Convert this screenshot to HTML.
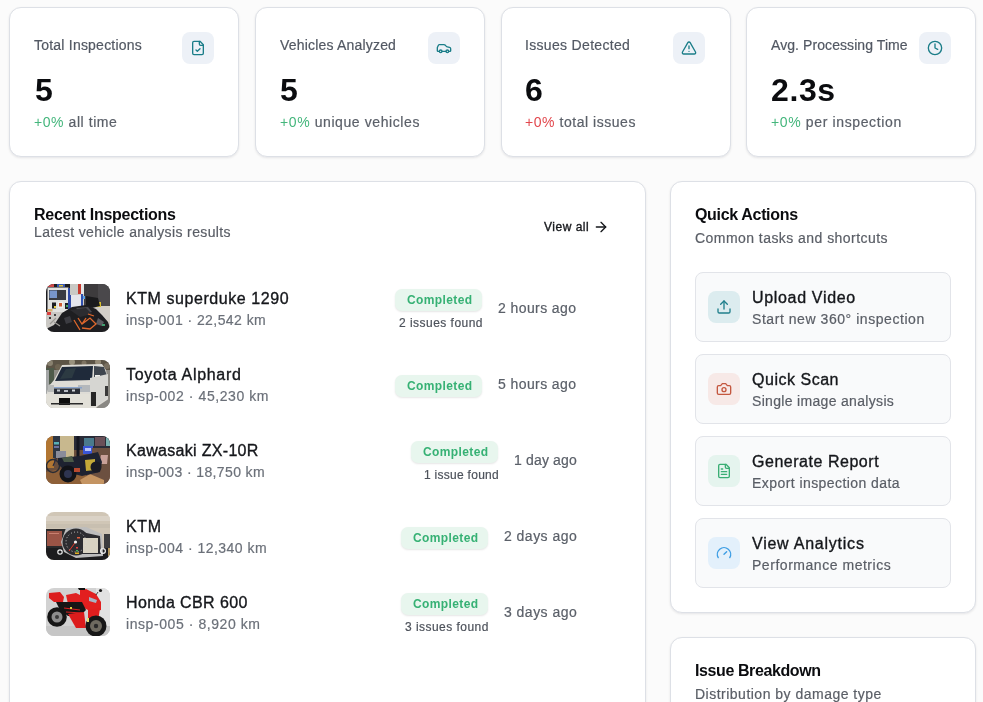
<!DOCTYPE html>
<html><head><meta charset="utf-8">
<style>
*{margin:0;padding:0;box-sizing:border-box}
html,body{width:983px;height:702px;overflow:hidden;background:#fbfbfb;font-family:"Liberation Sans",sans-serif}
.abs{position:absolute}
.t{position:absolute;white-space:pre;line-height:1;-webkit-text-stroke-width:.2px;will-change:transform}
.card{position:absolute;background:#fff;border:1px solid #dde0e6;border-radius:12px;box-shadow:0 1px 3px rgba(16,24,40,.06),0 1px 2px rgba(16,24,40,.04)}
.st{font-size:14px;color:#525863}
.num{font-size:32px;font-weight:700;color:#0b0c0f;-webkit-text-stroke-width:0}
.sub{font-size:14px;color:#5b6069}
.g{color:#44b67c;-webkit-text-stroke-width:0}
.r{color:#e2474d;-webkit-text-stroke-width:0}
.ibox{position:absolute;width:32px;height:32px;border-radius:8px;background:#edf1f7}
.ibox svg{position:absolute;left:8px;top:8px;width:16px;height:16px}
.h{font-size:16px;font-weight:700;color:#0b0c0f;-webkit-text-stroke-width:0}
.hs{font-size:14px;color:#5a5e66}
.rt{font-size:16px;color:#15171b;-webkit-text-stroke-width:.35px}
.rs{font-size:14px;color:#6b7079}
.badge{position:absolute;width:87px;height:22px;border-radius:7px;background:#e8f6ee;box-shadow:0 1px 2px rgba(0,0,0,.1)}
.bt{font-size:12px;font-weight:700;color:#36b174;-webkit-text-stroke-width:0}
.it{font-size:12px;color:#4d525b}
.tm{font-size:14px;color:#5b6069}
.thumb{position:absolute;left:46px;width:64px;height:48px;border-radius:8px;overflow:hidden}
.thumb svg{display:block}
.qa{position:absolute;left:695px;width:256px;height:70px;border:1px solid #e2e4e9;border-radius:8px;background:#f9fafb}
.qbox{position:absolute;left:12px;top:18px;width:32px;height:32px;border-radius:8px}
.qbox svg{position:absolute;left:8px;top:8px;width:16px;height:16px}
.qt{font-size:16px;color:#15171b;-webkit-text-stroke-width:.35px}
.qs{font-size:14px;color:#5a5e66}
</style></head><body>

<!-- stat cards -->
<div class="card" style="left:9px;top:7px;width:230px;height:150px"></div>
<div class="card" style="left:255px;top:7px;width:230px;height:150px"></div>
<div class="card" style="left:501px;top:7px;width:230px;height:150px"></div>
<div class="card" style="left:746px;top:7px;width:230px;height:150px"></div>

<div class="t st" style="left:34px;top:38px;letter-spacing:.22px">Total Inspections</div>
<div class="t st" style="left:280px;top:38px;letter-spacing:.19px">Vehicles Analyzed</div>
<div class="t st" style="left:525px;top:38px;letter-spacing:.32px">Issues Detected</div>
<div class="t st" style="left:771px;top:38px;letter-spacing:.08px">Avg. Processing Time</div>

<div class="t num" style="left:35px;top:74px">5</div>
<div class="t num" style="left:280px;top:74px">5</div>
<div class="t num" style="left:525px;top:74px">6</div>
<div class="t num" style="left:771px;top:74px;letter-spacing:.6px">2.3s</div>

<div class="t sub" style="left:34px;top:115px;letter-spacing:.56px"><span class="g">+0%</span> all time</div>
<div class="t sub" style="left:280px;top:115px;letter-spacing:.59px"><span class="g">+0%</span> unique vehicles</div>
<div class="t sub" style="left:525px;top:115px;letter-spacing:.54px"><span class="r">+0%</span> total issues</div>
<div class="t sub" style="left:771px;top:115px;letter-spacing:.63px"><span class="g">+0%</span> per inspection</div>

<div class="ibox" style="left:182px;top:32px"><svg viewBox="0 0 24 24" width="16" height="16" fill="none" stroke="#1a7d88" stroke-width="2" stroke-linecap="round" stroke-linejoin="round"><path d="M15 2H6a2 2 0 0 0-2 2v16a2 2 0 0 0 2 2h12a2 2 0 0 0 2-2V7Z"/><path d="M14 2v4a2 2 0 0 0 2 2h4"/><path d="m9 15 2 2 4-4"/></svg></div>
<div class="ibox" style="left:428px;top:32px"><svg viewBox="0 0 24 24" width="16" height="16" fill="none" stroke="#1a7d88" stroke-width="2" stroke-linecap="round" stroke-linejoin="round"><path d="M19 17h2c.6 0 1-.4 1-1v-3c0-.9-.7-1.7-1.5-1.9C18.700 10.6 16 10 16 10s-1.3-1.4-2.2-2.3c-.5-.4-1.1-.7-1.8-.7H5c-.6 0-1.1.4-1.4.9l-1.4 2.9A3.7 3.7 0 0 0 2 12v4c0 .6.4 1 1 1h2"/><circle cx="7" cy="17" r="2"/><path d="M9 17h6"/><circle cx="17" cy="17" r="2"/></svg></div>
<div class="ibox" style="left:673px;top:32px"><svg viewBox="0 0 24 24" width="16" height="16" fill="none" stroke="#1a7d88" stroke-width="2" stroke-linecap="round" stroke-linejoin="round"><path d="m21.73 18-8-14a2 2 0 0 0-3.48 0l-8 14A2 2 0 0 0 4 21h16a2 2 0 0 0 1.73-3"/><path d="M12 9v4"/><path d="M12 17h.01"/></svg></div>
<div class="ibox" style="left:919px;top:32px"><svg viewBox="0 0 24 24" width="16" height="16" fill="none" stroke="#1a7d88" stroke-width="2" stroke-linecap="round" stroke-linejoin="round"><circle cx="12" cy="12" r="10"/><polyline points="12 6 12 12 16 14"/></svg></div>

<!-- main card -->
<div class="card" style="left:9px;top:181px;width:637px;height:560px"></div>
<div class="t h" style="left:34px;top:207px;letter-spacing:-.28px">Recent Inspections</div>
<div class="t hs" style="left:34px;top:225px;letter-spacing:.38px">Latest vehicle analysis results</div>
<div class="t" style="left:544px;top:221px;font-size:12px;color:#15171b;letter-spacing:.5px;-webkit-text-stroke-width:.35px">View all</div>
<svg class="abs" style="left:593px;top:219px" viewBox="0 0 24 24" width="16" height="16" fill="none" stroke="#15171b" stroke-width="2" stroke-linecap="round" stroke-linejoin="round"><path d="M5 12h14"/><path d="m12 5 7 7-7 7"/></svg>

<div class="thumb" style="top:284px" id="th0"><svg width="64" height="48" viewBox="0 0 64 48"><rect width="64" height="48" fill="#cfcbc4"/>
<rect x="0" y="0" width="24" height="30" fill="#1c1c20"/>
<rect x="1.5" y="3.5" width="21" height="25" fill="#e2e2e0"/>
<rect x="2" y="0" width="6" height="3" fill="#d04848"/>
<rect x="11" y="0" width="8" height="3" fill="#3858b0"/>
<rect x="13" y="1" width="4" height="1.5" fill="#e0c030"/>
<rect x="3" y="6" width="17" height="10" fill="#3a3c42"/>
<rect x="3.5" y="6.5" width="7.5" height="7.5" fill="#7896cc"/>
<rect x="6" y="18.5" width="4" height="6" fill="#1e1e22"/>
<rect x="8" y="22" width="2" height="2" fill="#e8d040"/>
<rect x="12" y="18" width="5" height="6" fill="#f0f0ee"/>
<rect x="13" y="19" width="3" height="3.5" fill="#d05a30"/>
<rect x="19" y="19" width="4" height="6" fill="#1e1e22"/>
<rect x="20" y="21" width="2" height="2" fill="#40a060"/>
<rect x="1.5" y="25" width="5" height="2.5" fill="#d8b070"/>
<rect x="22" y="4" width="3" height="24" fill="#2f4aa6"/>
<rect x="24" y="0" width="8" height="11" fill="#c9c9c5"/>
<rect x="32" y="0" width="3" height="10" fill="#c63a30"/>
<rect x="35" y="0" width="3" height="10" fill="#e6e6e6"/>
<rect x="38" y="0" width="26" height="22" fill="#3d3b3d"/>
<rect x="52" y="0" width="12" height="22" fill="#4a484b"/>
<rect x="25" y="11" width="11" height="13" fill="#e4e5ec"/>
<rect x="35" y="10" width="2" height="13" fill="#3050b0"/>
<rect x="37" y="12" width="2" height="3" fill="#5aa0e0"/>
<rect x="52" y="22" width="12" height="18" fill="#d3cfc8"/>
<rect x="49" y="18" width="6" height="5" fill="#d8c030"/>
<rect x="0" y="28" width="18" height="16" fill="#cac8c4"/><rect x="3" y="33" width="2" height="2" fill="#333"/><rect x="8" y="30" width="2" height="2" fill="#444"/>
<rect x="1" y="28" width="4" height="3" fill="#d84040"/>
<path d="M40 12 L52 14 L54 22 L46 24 L40 22 Z" fill="#1a1a1c"/>
<path d="M16 29 L26 23 L40 21 L50 25 L56 31 L62 38 L64 44 L64 48 L0 48 L0 45 L8 41 L12 35 Z" fill="#1e1e21"/><path d="M30 24 L42 23 L46 28 L36 30 Z" fill="#4a4a50"/><path d="M52 34 L58 38 L56 42 L50 40 Z" fill="#5a5a60"/><path d="M18 34 L24 32 L26 38 L20 40 Z" fill="#3c3c42"/>
<path d="M24 26 L40 24 L46 30 L34 33 Z" fill="#2c2c30"/>
<path d="M10 34 L4 40 M8 38 L14 42" stroke="#9a9894" stroke-width="1.2"/>
<path d="M28 36 L34 46 M32 34 L36 40 L44 34 L50 40 L44 45 L36 44 M36 40 L40 34 M42 30 L48 32" stroke="#e0682c" stroke-width="1.3" fill="none"/>
<rect x="56" y="40" width="3" height="2" fill="#40a070"/></svg></div>
<div class="t rt" style="left:126px;top:291px;letter-spacing:0.565px">KTM superduke 1290</div>
<div class="t rs" style="left:126px;top:313px;letter-spacing:0.432px">insp-001 · 22,542 km</div>
<div class="badge" style="left:395px;top:289px"></div>
<div class="t bt" style="left:407px;top:294px;letter-spacing:.375px">Completed</div>
<div class="t it" style="left:399px;top:317px;letter-spacing:0.47px">2 issues found</div>
<div class="t tm" style="left:498px;top:301px;letter-spacing:0.41px">2 hours ago</div>
<div class="thumb" style="top:360px" id="th1"><svg width="64" height="48" viewBox="0 0 64 48"><rect width="64" height="48" fill="#8c8a84"/>
<rect x="0" y="0" width="64" height="10" fill="#5c5446"/>
<circle cx="4" cy="3" r="3" fill="#8a8270"/><circle cx="12" cy="7" r="3" fill="#6e6452"/><circle cx="26" cy="2" r="3" fill="#9a927e"/><circle cx="38" cy="3" r="2.5" fill="#7e7462"/><circle cx="52" cy="2" r="3" fill="#968c78"/><circle cx="61" cy="6" r="3" fill="#7a7060"/>
<rect x="0" y="8" width="8" height="16" fill="#4e5a4a"/>
<rect x="0" y="10" width="3" height="30" fill="#a4a6a6"/>
<path d="M16 5 L56 4 L60 10 L62 22 L62 40 L56 48 L0 48 L0 36 L3 26 L8 20 Z" fill="#dedcd6"/>
<path d="M16 7 L47 6 L46 20 L9 21 Z" fill="#1f2a3a"/>
<path d="M20 9 L30 8 L26 18 L14 19 Z" fill="#2c3a42"/>
<path d="M48 6 L58 7 L61 16 L48 18 Z" fill="#3e454e"/>
<rect x="49" y="15" width="5" height="3" fill="#eeeeea"/>
<rect x="2" y="25" width="6" height="7" fill="#b8bab8"/>
<rect x="32" y="25" width="12" height="7" fill="#b4b8bc"/>
<rect x="8" y="27" width="28" height="1.5" fill="#8aa4cc"/>
<rect x="8" y="28.5" width="26" height="5.5" fill="#2a2e36"/>
<rect x="11" y="29.5" width="3" height="2" fill="#c8ccd0"/><rect x="18" y="30" width="4" height="2" fill="#b8bcc4"/><rect x="26" y="29.5" width="3" height="2" fill="#d0d4d8"/>
<rect x="0" y="34" width="44" height="14" fill="#e2e0d8"/>
<rect x="13" y="38" width="11" height="7" fill="#0e0e0e"/>
<rect x="5" y="43" width="32" height="1.5" fill="#2a2a2a"/>
<path d="M44 18 L62 14 L62 38 L50 46 L44 46 Z" fill="#d6d6d2"/>
<rect x="45" y="32" width="5" height="14" fill="#262626"/>
<rect x="59" y="26" width="3" height="10" fill="#3a3a3a"/>
<path d="M52 46 L64 38 L64 48 L50 48 Z" fill="#8a8884"/></svg></div>
<div class="t rt" style="left:126px;top:367px;letter-spacing:0.692px">Toyota Alphard</div>
<div class="t rs" style="left:126px;top:389px;letter-spacing:0.579px">insp-002 · 45,230 km</div>
<div class="badge" style="left:395px;top:375px"></div>
<div class="t bt" style="left:407px;top:380px;letter-spacing:.375px">Completed</div>
<div class="t tm" style="left:498px;top:377px;letter-spacing:0.41px">5 hours ago</div>
<div class="thumb" style="top:436px" id="th2"><svg width="64" height="48" viewBox="0 0 64 48"><rect width="64" height="48" fill="#6a4e3c"/>
<rect x="0" y="0" width="8" height="32" fill="#b27632"/>
<rect x="7" y="0" width="8" height="22" fill="#2e3644"/>
<rect x="8" y="6" width="5" height="2.5" fill="#58b0b8"/>
<rect x="8" y="10" width="5" height="2" fill="#6a70a0"/>
<rect x="14" y="0" width="14" height="22" fill="#c8b88e"/>
<rect x="28" y="0" width="36" height="14" fill="#2a2c38"/>
<rect x="38" y="2" width="10" height="8" fill="#4a7a8c"/>
<rect x="49" y="1" width="10" height="9" fill="#6a5058"/>
<rect x="60" y="0" width="4" height="10" fill="#7ab0b0"/>
<rect x="37" y="10" width="10" height="8" fill="#3a56d6"/>
<rect x="39" y="12" width="6" height="3" fill="#b8c4f8"/>
<rect x="30.5" y="0" width="3" height="24" fill="#141620"/>
<rect x="46" y="12" width="18" height="36" fill="#6c5040"/>
<path d="M55 19 L62 19 L61 28 L53 28 Z" fill="#c8a098"/>
<path d="M0 36 L20 32 L40 38 L40 48 L0 48 Z" fill="#8e6038"/>
<path d="M34 44 L44 38 L58 44 L58 48 L36 48 Z" fill="#c49462"/>
<circle cx="7" cy="30" r="6.5" fill="none" stroke="#2a2c34" stroke-width="1.4"/>
<path d="M7 30 L12 18 L20 22" stroke="#2a2c40" stroke-width="1.2" fill="none"/>
<rect x="10" y="15" width="10" height="7" fill="#8a8c9a"/>
<path d="M12 22 L34 20 L52 16 L56 26 L54 36 L36 40 L20 36 L12 28 Z" fill="#1e2230"/>
<path d="M16 22 L26 20 L28 26 L18 26 Z" fill="#4a5a48"/>
<path d="M39 24 L49 23 L49 34 L40 35 Z" fill="#c4aa38"/>
<circle cx="22" cy="38" r="8.5" fill="#121318"/>
<circle cx="22" cy="38" r="4" fill="#2e3450"/>
<circle cx="50" cy="31" r="5.5" fill="#1a1b24"/>
<rect x="28" y="32" width="6" height="4" fill="#b84a30"/></svg></div>
<div class="t rt" style="left:126px;top:443px;letter-spacing:0.307px">Kawasaki ZX-10R</div>
<div class="t rs" style="left:126px;top:465px;letter-spacing:0.374px">insp-003 · 18,750 km</div>
<div class="badge" style="left:411px;top:441px"></div>
<div class="t bt" style="left:423px;top:446px;letter-spacing:.375px">Completed</div>
<div class="t it" style="left:424px;top:469px;letter-spacing:0.28px">1 issue found</div>
<div class="t tm" style="left:514px;top:453px;letter-spacing:0.16px">1 day ago</div>
<div class="thumb" style="top:512px" id="th3"><svg width="64" height="48" viewBox="0 0 64 48"><rect width="64" height="48" fill="#d0c6b6"/>
<rect x="0" y="4" width="64" height="5" fill="#dad2c6"/>
<rect x="0" y="12" width="64" height="4" fill="#c8bfb0"/>
<rect x="0" y="17" width="20" height="20" fill="#2a2a2c"/>
<rect x="1" y="19" width="15" height="15" fill="#9a5446"/>
<rect x="3" y="21" width="10" height="1" fill="#c88070"/>
<rect x="0" y="36" width="64" height="12" fill="#1c1c1e"/>
<path d="M20 16 L40 15 L56 22 L57 44 L30 46 L18 40 L15 30 Z" fill="#bdbdbd"/>
<circle cx="30" cy="30" r="13.5" fill="#2c2c30"/>
<path d="M36 20 L54 24 L55 42 L36 42 Z" fill="#2c2c30"/>
<rect x="37" y="26" width="15" height="15" fill="#d8d2c2"/>
<circle cx="30" cy="30" r="10" fill="none" stroke="#d8d8d8" stroke-width=".9" stroke-dasharray="1 2.2"/>
<path d="M29.5 30 L23 39" stroke="#e03828" stroke-width="1"/>
<circle cx="29.5" cy="30" r="1.6" fill="#f0f0f0"/>
<rect x="30" y="35" width="2" height="1.5" fill="#e04040"/>
<rect x="30" y="38" width="2" height="1.5" fill="#40b060"/>
<rect x="29" y="40.5" width="4" height="1.5" fill="#e0b020"/>
<rect x="31" y="25" width="3" height="1.5" fill="#e06040"/>
<rect x="58" y="22" width="6" height="14" fill="#3c3c3e"/>
<circle cx="57" cy="39" r="2.4" fill="none" stroke="#eee" stroke-width="1.2"/>
<circle cx="14" cy="40" r="2.2" fill="none" stroke="#eee" stroke-width="1.2"/>
<rect x="62" y="36" width="2" height="8" fill="#b89a60"/></svg></div>
<div class="t rt" style="left:126px;top:519px;letter-spacing:0.65px">KTM</div>
<div class="t rs" style="left:126px;top:541px;letter-spacing:0.479px">insp-004 · 12,340 km</div>
<div class="badge" style="left:401px;top:527px"></div>
<div class="t bt" style="left:413px;top:532px;letter-spacing:.375px">Completed</div>
<div class="t tm" style="left:504px;top:529px;letter-spacing:0.47px">2 days ago</div>
<div class="thumb" style="top:588px" id="th4"><svg width="64" height="48" viewBox="0 0 64 48"><rect width="64" height="48" fill="#d2d2d2"/>
<rect x="50" y="0" width="14" height="48" fill="#e2e2e2"/>
<rect x="0" y="38" width="64" height="10" fill="#c6c6c6"/>
<path d="M3 5 L14 4 L18 9 L17 14 L8 14 L3 10 Z" fill="#dc1e1e"/>
<path d="M20 7 L30 5 L36 8 L36 15 L22 16 Z" fill="#e02020"/>
<path d="M34 2 L40 1 L50 6 L55 14 L55 22 L46 24 L38 20 L34 12 Z" fill="#e21f1f"/>
<path d="M43 9 L51 12 L50 15 L43 13 Z" fill="#a8b4c4"/>
<path d="M10 14 L36 14 L40 22 L34 28 L22 28 L14 22 Z" fill="#161616"/>
<path d="M18 20 L34 22 M20 24 L36 25" stroke="#d82020" stroke-width="1.2"/>
<rect x="24" y="19" width="2" height="2" fill="#e0d040"/>
<path d="M22 26 L38 24 L40 40 L30 40 Z" fill="#dc1c1c"/>
<path d="M42 22 L54 20 L52 34 L42 34 Z" fill="#e01e1e"/>
<circle cx="11" cy="29" r="9.8" fill="#151515"/>
<circle cx="11" cy="29" r="5.5" fill="#8c8c8c"/>
<circle cx="11" cy="29" r="2" fill="#3a3a3a"/>
<circle cx="50" cy="38" r="10.5" fill="#171717"/>
<circle cx="50" cy="38" r="6" fill="#6e6a60"/>
<circle cx="50" cy="38" r="2.2" fill="#2a2a2a"/>
<rect x="41" y="30" width="2" height="4" fill="#e8e070"/>
<path d="M32 0 L39 0 L39 2 L33 2 Z" fill="#111"/>
<circle cx="54.5" cy="2.5" r="1.6" fill="#1a1a1a"/>
<path d="M52 4 L50 7" stroke="#222" stroke-width=".8"/></svg></div>
<div class="t rt" style="left:126px;top:595px;letter-spacing:0.408px">Honda CBR 600</div>
<div class="t rs" style="left:126px;top:617px;letter-spacing:0.567px">insp-005 · 8,920 km</div>
<div class="badge" style="left:401px;top:593px"></div>
<div class="t bt" style="left:413px;top:598px;letter-spacing:.375px">Completed</div>
<div class="t it" style="left:405px;top:621px;letter-spacing:0.46px">3 issues found</div>
<div class="t tm" style="left:504px;top:605px;letter-spacing:0.47px">3 days ago</div>

<!-- quick actions -->
<div class="card" style="left:670px;top:181px;width:306px;height:432px"></div>
<div class="t h" style="left:695px;top:207px;letter-spacing:-.33px">Quick Actions</div>
<div class="t hs" style="left:695px;top:231px;letter-spacing:.45px">Common tasks and shortcuts</div>

<div class="qa" style="top:272px"><div class="qbox" style="background:#dcecef" id="qup"><svg viewBox="0 0 24 24" width="16" height="16" fill="none" stroke="#1f7f8c" stroke-width="2" stroke-linecap="round" stroke-linejoin="round"><path d="M21 15v4a2 2 0 0 1-2 2H5a2 2 0 0 1-2-2v-4"/><polyline points="17 8 12 3 7 8"/><line x1="12" x2="12" y1="3" y2="15"/></svg></div></div>
<div class="t qt" style="left:752px;top:290px;letter-spacing:0.673px">Upload Video</div>
<div class="t qs" style="left:752px;top:312px;letter-spacing:0.554px">Start new 360° inspection</div>
<div class="qa" style="top:354px"><div class="qbox" style="background:#f7e9e7" id="qcam"><svg viewBox="0 0 24 24" width="16" height="16" fill="none" stroke="#c4573f" stroke-width="2" stroke-linecap="round" stroke-linejoin="round"><path d="M14.5 4h-5L7 7H4a2 2 0 0 0-2 2v9a2 2 0 0 0 2 2h16a2 2 0 0 0 2-2V9a2 2 0 0 0-2-2h-3l-2.5-3z"/><circle cx="12" cy="13" r="3"/></svg></div></div>
<div class="t qt" style="left:752px;top:372px;letter-spacing:0.522px">Quick Scan</div>
<div class="t qs" style="left:752px;top:394px;letter-spacing:0.32px">Single image analysis</div>
<div class="qa" style="top:436px"><div class="qbox" style="background:#e5f4ee" id="qdoc"><svg viewBox="0 0 24 24" width="16" height="16" fill="none" stroke="#3aae74" stroke-width="2" stroke-linecap="round" stroke-linejoin="round"><path d="M15 2H6a2 2 0 0 0-2 2v16a2 2 0 0 0 2 2h12a2 2 0 0 0 2-2V7Z"/><path d="M14 2v4a2 2 0 0 0 2 2h4"/><path d="M10 9H8"/><path d="M16 13H8"/><path d="M16 17H8"/></svg></div></div>
<div class="t qt" style="left:752px;top:454px;letter-spacing:0.529px">Generate Report</div>
<div class="t qs" style="left:752px;top:476px;letter-spacing:0.433px">Export inspection data</div>
<div class="qa" style="top:518px"><div class="qbox" style="background:#e3f0fb" id="qgauge"><svg viewBox="0 0 24 24" width="16" height="16" fill="none" stroke="#3c9de4" stroke-width="2" stroke-linecap="round" stroke-linejoin="round"><path d="m12 14 4-4"/><path d="M3.34 19a10 10 0 1 1 17.32 0"/></svg></div></div>
<div class="t qt" style="left:752px;top:536px;letter-spacing:0.762px">View Analytics</div>
<div class="t qs" style="left:752px;top:558px;letter-spacing:0.533px">Performance metrics</div>

<div class="card" style="left:670px;top:637px;width:306px;height:120px"></div>
<div class="t h" style="left:695px;top:663px;letter-spacing:-.4px">Issue Breakdown</div>
<div class="t hs" style="left:695px;top:687px;letter-spacing:.49px">Distribution by damage type</div>

</body></html>
